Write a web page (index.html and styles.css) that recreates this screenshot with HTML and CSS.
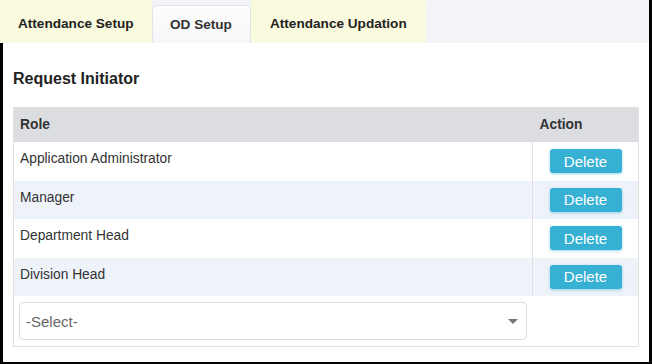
FILE: index.html
```html
<!DOCTYPE html>
<html lang="en">
<head>
    <meta charset="UTF-8">
    <meta name="viewport" content="width=device-width, initial-scale=1.0">
    <title>OD Setup</title>
    <link rel="stylesheet" href="styles.css">
</head>
<body>
    <div class="page">
        <div class="tabs">
            <div class="tab tab-first">Attendance Setup</div>
            <div class="tab active">OD Setup</div>
            <div class="tab tab-last">Attendance Updation</div>
        </div>
        <div class="content">
            <h3 class="section-title">Request Initiator</h3>
            <table class="grid">
                <thead>
                    <tr>
                        <th class="col-role">Role</th>
                        <th class="col-action">Action</th>
                    </tr>
                </thead>
                <tbody>
                    <tr class="row-a">
                        <td class="col-role">Application Administrator</td>
                        <td class="col-action"><button class="delete-button">Delete</button></td>
                    </tr>
                    <tr class="row-b">
                        <td class="col-role">Manager</td>
                        <td class="col-action"><button class="delete-button">Delete</button></td>
                    </tr>
                    <tr class="row-a">
                        <td class="col-role">Department Head</td>
                        <td class="col-action"><button class="delete-button">Delete</button></td>
                    </tr>
                    <tr class="row-b">
                        <td class="col-role">Division Head</td>
                        <td class="col-action"><button class="delete-button">Delete</button></td>
                    </tr>
                    <tr class="select-row">
                        <td colspan="2">
                            <div class="select-box">
                                <span>-Select-</span>
                                <span class="caret"></span>
                            </div>
                        </td>
                    </tr>
                </tbody>
            </table>
        </div>
    </div>
</body>
</html>
```

FILE: styles.css
```css
body {
    margin: 0;
    padding: 0;
    background-color: #000;
    font-family: "Liberation Sans", Arial, sans-serif;
    color: #333;
}

.page {
    width: 649px;
    height: 362px;
    background-color: #fff;
    display: flex;
    flex-direction: column;
}

/* Tabs */
.tabs {
    display: flex;
    height: 43px;
    background-color: #f2f4f8;
}

.tab {
    height: 43px;
    padding-top: 4px;
    line-height: 39px;
    font-size: 13.6px;
    font-weight: bold;
    color: #222;
    background-color: #fafade;
    box-sizing: border-box;
}

.tab-first {
    width: 152px;
    padding-left: 18px;
}

.tab-last {
    width: 175px;
    padding-left: 19px;
    border-top-right-radius: 4px;
}

.tab.active {
    width: 99px;
    margin-top: 5px;
    height: 38px;
    padding-top: 0;
    line-height: 38px;
    padding-left: 17px;
    color: #333;
    background: linear-gradient(#fdfdfd, #f6f7f9);
    border: 1px solid #e3e4e8;
    border-bottom: none;
    border-radius: 4px 4px 0 0;
}

/* Content */
.content {
    flex: 1;
    border-left: 3px solid #000;
    padding: 0 10px;
}

.section-title {
    margin: 27px 0 0;
    height: 37px;
    font-size: 16px;
    font-weight: bold;
    color: #222;
}

.grid {
    width: 626px;
    border-collapse: collapse;
    border: 1px solid #e0e0e0;
    font-size: 13.8px;
}

.grid th {
    height: 32px;
    background-color: #dcdde1;
    text-align: left;
    font-weight: bold;
    color: #333;
    padding: 0 6px 2px;
}

.grid td {
    height: 33.5px;
    padding: 0 6px 5px;
    color: #333;
}

.grid th.col-action {
    padding-left: 7px;
}

.col-role {
    width: 506px;
}

.grid td.col-action {
    height: 38.5px;
    border-left: 1px solid #e0e0e0;
    text-align: center;
    padding: 0;
}

.row-a {
    background-color: #fff;
}

.row-b {
    background-color: #eef2f9;
}

.delete-button {
    width: 72px;
    height: 24px;
    padding: 0;
    border: none;
    border-radius: 3px;
    background-color: #36b0d3;
    color: #fff;
    font-family: "Liberation Sans", Arial, sans-serif;
    font-size: 15px;
    box-shadow: 0 1px 3px rgba(54, 176, 211, 0.5);
    cursor: pointer;
}

.grid .select-row td {
    height: 50px;
    padding: 0 0 0 5px;
}

.select-box {
    width: 508px;
    height: 38px;
    box-sizing: border-box;
    border: 1px solid #dcdcdc;
    border-radius: 4px;
    display: flex;
    align-items: center;
    justify-content: space-between;
    padding: 0 8px 0 6px;
    color: #666;
    font-size: 15px;
}

.caret {
    width: 0;
    height: 0;
    border-left: 5px solid transparent;
    border-right: 5px solid transparent;
    border-top: 5px solid #777;
}
```
